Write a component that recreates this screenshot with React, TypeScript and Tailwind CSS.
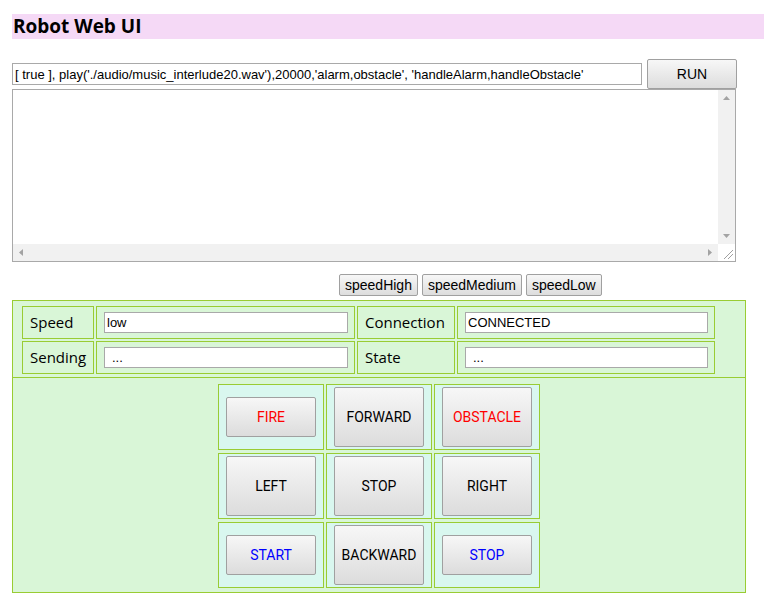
import { useState } from 'react';

const gridButtons = [
  { label: 'FIRE', color: 'text-[#ff0000]', big: false },
  { label: 'FORWARD', color: 'text-black', big: true },
  { label: 'OBSTACLE', color: 'text-[#ff0000]', big: true },
  { label: 'LEFT', color: 'text-black', big: true },
  { label: 'STOP', color: 'text-black', big: true },
  { label: 'RIGHT', color: 'text-black', big: true },
  { label: 'START', color: 'text-[#0000ff]', big: false },
  { label: 'BACKWARD', color: 'text-black', big: true },
  { label: 'STOP', color: 'text-[#0000ff]', big: false },
];

function Arrow({ dir }: { dir: 'up' | 'down' | 'left' | 'right' }) {
  const pts = {
    up: '0,4 3.5,0 7,4',
    down: '0,0 7,0 3.5,4',
    left: '4,0 4,7 0,3.5',
    right: '0,0 0,7 4,3.5',
  }[dir];
  const vertical = dir === 'up' || dir === 'down';
  return (
    <svg width={vertical ? 7 : 4} height={vertical ? 4 : 7} viewBox={vertical ? '0 0 7 4' : '0 0 4 7'}>
      <polygon points={pts} fill="#a3a3a3" />
    </svg>
  );
}

export default function App() {
  const [cmd, setCmd] = useState(
    "[ true ], play('./audio/music_interlude20.wav'),20000,'alarm,obstacle', 'handleAlarm,handleObstacle'"
  );
  const [log, setLog] = useState('');

  const label = 'border border-[#99cc33] px-[7px] flex items-center text-[15px] text-black font-["Open_Sans",sans-serif]';
  const field = 'w-full h-[21px] border border-[#a9a9a9] bg-white px-[2px] text-[13px] font-["Liberation_Sans",Arial,sans-serif] text-black outline-none';

  return (
    <div className="min-h-screen bg-white pt-[14px] font-['Liberation_Sans',Arial,sans-serif]">
      <h1 className="ml-[12px] h-[25px] bg-[#f5d9f6] pl-[1px] text-[19px] font-bold leading-[25px] text-black font-['Open_Sans',sans-serif]">
        Robot Web UI
      </h1>

      <div className="mt-[20px] ml-[12px] flex items-center gap-[5px]">
        <input
          value={cmd}
          onChange={(e) => setCmd(e.target.value)}
          className="w-[630px] h-[22px] border border-[#a9a9a9] px-[2px] text-[13px] text-black outline-none"
        />
        <button className="w-[90px] h-[30px] rounded-[2px] border border-[#a0a0a0] bg-gradient-to-b from-[#f7f7f7] to-[#dddddd] text-[14px] text-black">
          RUN
        </button>
      </div>

      {/* output log, with classic scrollbars */}
      <div className="ml-[12px] flex w-[724px] h-[173px] flex-col border border-[#a9a9a9] bg-white">
        <div className="flex flex-1 min-h-0">
          <textarea
            value={log}
            onChange={(e) => setLog(e.target.value)}
            className="flex-1 resize-none overflow-hidden whitespace-pre text-[13px] outline-none"
          />
          <div className="flex w-[17px] flex-col items-center justify-between bg-[#f1f1f1] py-[6px]">
            <Arrow dir="up" />
            <Arrow dir="down" />
          </div>
        </div>
        <div className="flex h-[17px]">
          <div className="flex flex-1 items-center justify-between bg-[#f1f1f1] px-[6px]">
            <Arrow dir="left" />
            <Arrow dir="right" />
          </div>
          <div className="flex w-[17px] items-end justify-end bg-white p-[2px]">
            <svg width="11" height="11" viewBox="0 0 11 11">
              <line x1="2" y1="11" x2="11" y2="2" stroke="#a0a0a0" strokeWidth="1" />
              <line x1="6" y1="11" x2="11" y2="6" stroke="#a0a0a0" strokeWidth="1" />
            </svg>
          </div>
        </div>
      </div>

      <div className="mt-[12px] ml-[339px] flex gap-[4px]">
        {['speedHigh', 'speedMedium', 'speedLow'].map((s) => (
          <button
            key={s}
            className="h-[22px] px-[5px] rounded-[2px] border border-[#a0a0a0] bg-gradient-to-b from-[#f7f7f7] to-[#dddddd] text-[14px] text-black"
          >
            {s}
          </button>
        ))}
      </div>

      <div className="ml-[12px] mt-[4px] w-[734px] border border-[#99cc33] bg-[#d9f6d7]">
        <div className="border-b border-[#99cc33] pt-[5px] pb-[3px] pl-[9px]">
          <div className="grid grid-cols-[72px_259px_98px_258px] grid-rows-[33px_33px] gap-[2px]">
            <div className={label}>Speed</div>
            <div className="border border-[#99cc33] flex items-center pl-[7px] pr-[6px]">
              <input readOnly value="low" className={field} />
            </div>
            <div className={label}>Connection</div>
            <div className="border border-[#99cc33] flex items-center pl-[7px] pr-[6px]">
              <input readOnly value="CONNECTED" className={field} />
            </div>
            <div className={label}>Sending</div>
            <div className="border border-[#99cc33] flex items-center pl-[7px] pr-[6px]">
              <input readOnly value="..." className={field + ' pl-[7px]'} />
            </div>
            <div className={label}>State</div>
            <div className="border border-[#99cc33] flex items-center pl-[7px] pr-[6px]">
              <input readOnly value="..." className={field + ' pl-[7px]'} />
            </div>
          </div>
        </div>

        <div className="flex justify-center pt-[6px] pb-[4px]">
          <div className="grid grid-cols-[106px_106px_106px] auto-rows-[66px] gap-x-[2px] gap-y-[3px]">
            {gridButtons.map((b, i) => (
              <div key={i} className="flex items-center justify-center border border-[#99cc33] bg-[#d9f7ef]">
                <button
                  className={`w-[90px] ${b.big ? 'h-[60px]' : 'h-[40px]'} rounded-[2px] border border-[#a0a0a0] bg-gradient-to-b from-[#f7f7f7] to-[#dcdcdc] text-[14px] font-['Roboto',sans-serif] ${b.color}`}
                >
                  {b.label}
                </button>
              </div>
            ))}
          </div>
        </div>
      </div>
    </div>
  );
}
